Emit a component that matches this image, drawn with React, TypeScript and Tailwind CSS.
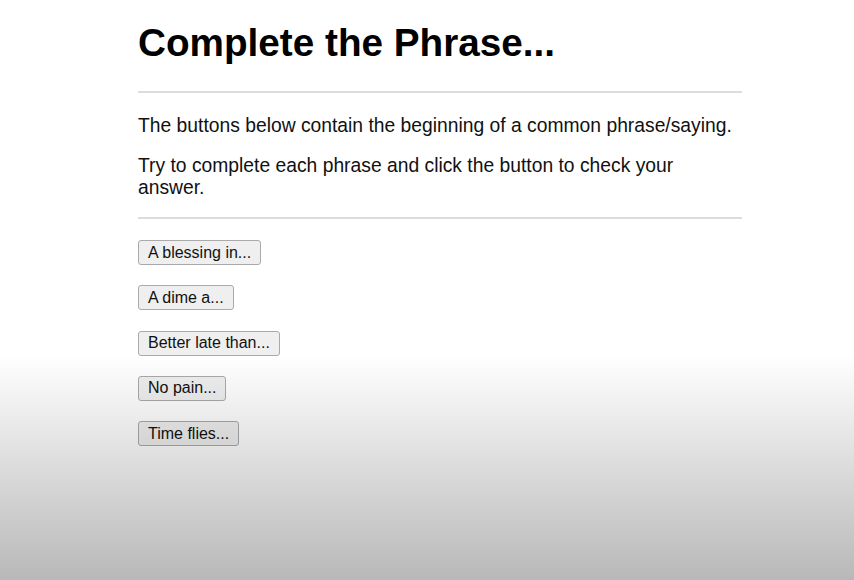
const phrases = ["A blessing in...", "A dime a...", "Better late than...", "No pain...", "Time flies..."];

export default function App() {
  return (
    <div className="relative min-h-[580px] bg-white font-['Liberation_Sans',Arial,sans-serif] text-[#111]">
      <div className="ml-[138px] w-[604px] pt-[20px]">
        <h1 className="text-[38.7px] leading-[46px] font-bold text-black">Complete the Phrase...</h1>
        <hr className="mt-[25px] border-t-2 border-[#dcdcdc]" />
        <p className="mt-[22px] text-[19.3px] leading-[22px]">
          The buttons below contain the beginning of a common phrase/saying.
        </p>
        <p className="mt-[18px] text-[19.3px] leading-[22px]">
          Try to complete each phrase and click the button to check your answer.
        </p>
        <hr className="mt-[18px] border-t-2 border-[#dcdcdc]" />
        <div className="mt-[21px] flex flex-col items-start gap-[20.3px]">
          {phrases.map((p) => (
            <button
              key={p}
              className="h-[25px] rounded-[3px] border border-[#aaaaaa] bg-[#efefef] px-[9px] text-[16px] leading-none text-[#111]"
            >
              {p}
            </button>
          ))}
        </div>
      </div>
      <div className="pointer-events-none absolute inset-0 bg-[linear-gradient(to_bottom,transparent_355px,rgba(0,0,0,0.28)_580px)]" />
    </div>
  );
}
